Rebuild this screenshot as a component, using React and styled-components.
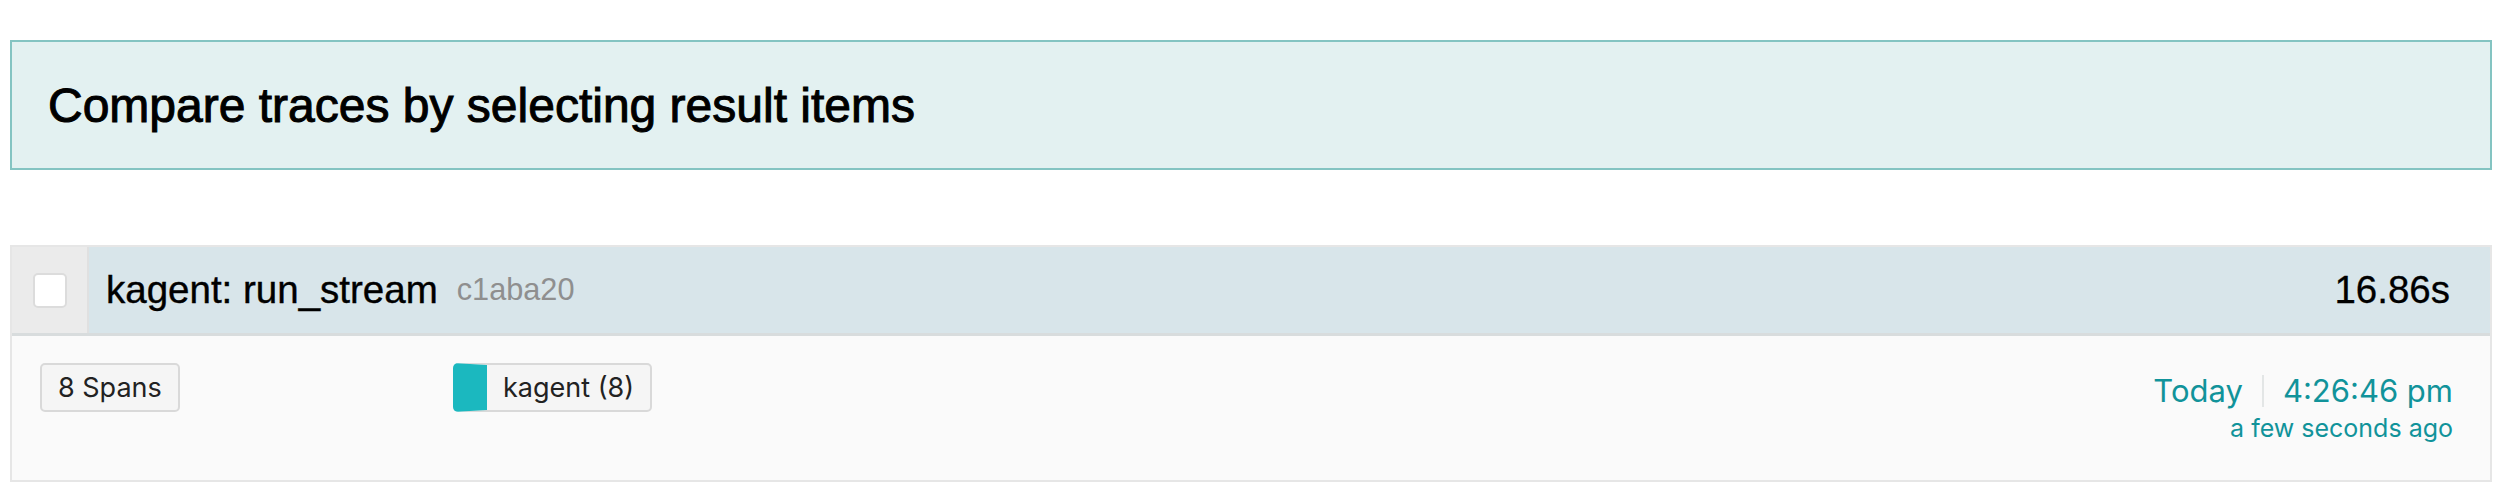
import React from "react";
import styled, { createGlobalStyle } from "styled-components";

const Global = createGlobalStyle`
  html, body { margin: 0; padding: 0; background: #ffffff; }
  body { font-family: "Liberation Sans", Arial, sans-serif; }
  * { box-sizing: border-box; }
`;

const Page = styled.div`
  width: 2512px;
  padding: 40px 20px 0 10px;
`;

const Alert = styled.div`
  height: 130px;
  display: flex;
  align-items: center;
  padding-left: 36px;
  background: #e3f1f1;
  border: 2px solid #84c4c2;
`;

const AlertText = styled.div`
  font-family: "Liberation Sans", Arial, sans-serif;
  font-size: 48px;
  font-weight: 400;
  color: #000;
  -webkit-text-stroke: 1px #000;
`;

const Card = styled.div`
  margin-top: 75px;
  border: 2px solid #e6e6e6;
  background: #fafafa;
`;

const Header = styled.div`
  display: flex;
  align-items: stretch;
  height: 89px;
  background: #d8e5ea;
  border-bottom: 3px solid #d8dcdd;
`;

const CheckCell = styled.div`
  width: 77px;
  flex: none;
  display: flex;
  align-items: center;
  justify-content: center;
  background: #ebebeb;
  border-right: 2px solid #e0e0e0;
`;

const CheckBox = styled.span`
  display: block;
  width: 34px;
  height: 35px;
  background: #fff;
  border: 2px solid #dcdcdc;
  border-radius: 5px;
`;

const Title = styled.div`
  flex: 1;
  display: flex;
  align-items: center;
  padding-left: 17px;
  padding-right: 40px;
  font-family: "Liberation Sans", Arial, sans-serif;
  color: #000;
`;

const TraceName = styled.span`
  font-size: 38.5px;
  -webkit-text-stroke: 0.4px #000;
`;

const TraceId = styled.span`
  margin-left: 19px;
  font-size: 30.7px;
  color: #8f8f8f;
`;

const Duration = styled.span`
  margin-left: auto;
  font-size: 38.5px;
  -webkit-text-stroke: 0.3px #000;
`;

const Body = styled.div`
  display: grid;
  grid-template-columns: 4fr 16fr 4fr;
  height: 144px;
`;

const Col = styled.div`
  padding: ${(p) => (p.$right ? "34px 37px 0 0" : "27px 0 0 28px")};
  text-align: ${(p) => (p.$right ? "right" : "left")};
  font-family: Inter, "Open Sans", sans-serif;
`;

const Tag = styled.span`
  display: inline-flex;
  align-items: center;
  height: 49px;
  padding: 0 16px;
  background: #f5f5f5;
  border: 2px solid #d9d9d9;
  border-left: ${(p) => (p.$color ? `34px solid ${p.$color}` : "2px solid #d9d9d9")};
  border-radius: 5px;
  font-size: 27px;
  color: #222;
`;

const TimeLine = styled.div`
  font-size: 31px;
  line-height: 41px;
  color: #11939a;
  display: flex;
  justify-content: flex-end;
  align-items: center;
`;

const VDivider = styled.span`
  display: inline-block;
  width: 2px;
  height: 32px;
  margin: 0 19px;
  background: #e3e6e6;
`;

const Ago = styled.div`
  font-size: 25px;
  line-height: 34px;
  color: #11939a;
`;

export default function App() {
  return (
    <>
      <Global />
      <Page>
        <Alert>
          <AlertText>Compare traces by selecting result items</AlertText>
        </Alert>
        <Card>
          <Header>
            <CheckCell>
              <CheckBox />
            </CheckCell>
            <Title>
              <TraceName>kagent: run_stream</TraceName>
              <TraceId>c1aba20</TraceId>
              <Duration>16.86s</Duration>
            </Title>
          </Header>
          <Body>
            <Col>
              <Tag>8 Spans</Tag>
            </Col>
            <Col>
              <Tag $color="#1bb8bf">kagent (8)</Tag>
            </Col>
            <Col $right>
              <TimeLine>
                <span>Today</span>
                <VDivider />
                <span>4:26:46 pm</span>
              </TimeLine>
              <Ago>a few seconds ago</Ago>
            </Col>
          </Body>
        </Card>
      </Page>
    </>
  );
}
